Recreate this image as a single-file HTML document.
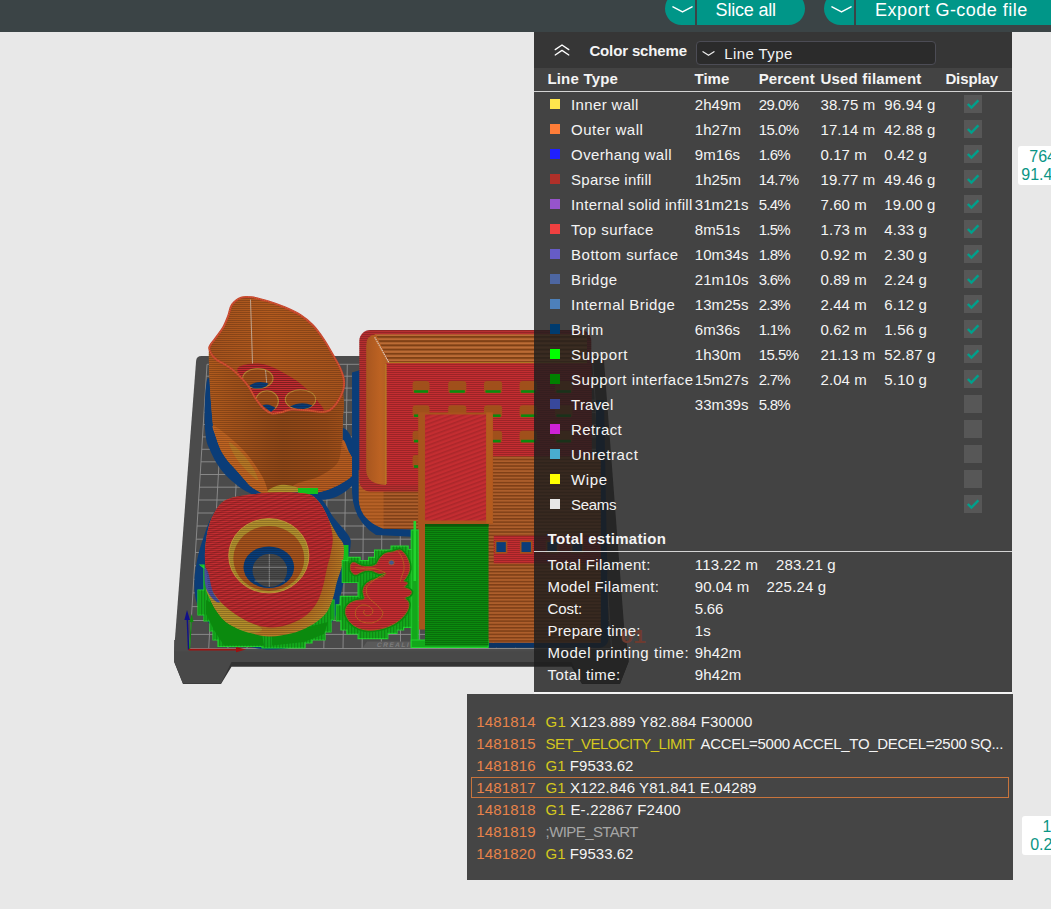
<!DOCTYPE html>
<html><head><meta charset="utf-8"><title>G-code preview</title>
<style>
html,body{margin:0;padding:0;}
body{width:1051px;height:909px;overflow:hidden;background:#e8e8e8;position:relative;font-family:"Liberation Sans",sans-serif;font-size:15px;color:#f4f4f4;}
.abs{position:absolute;}
#topbar{left:0;top:0;width:1051px;height:32px;background:#3b4446;}
.btn{top:-8px;height:33px;background:#009688;border-radius:17px;}
.btn .sep{position:absolute;top:0;width:2px;height:33px;background:#3b4446;}
#scene{left:0;top:0;}
#panel{left:534px;top:32px;width:477.5px;height:660px;background:rgba(30,30,30,0.815);}
#phead{left:534px;top:32px;width:477.5px;height:36px;background:#363636;}
.t{position:absolute;white-space:pre;line-height:18px;height:18px;}
.bt{line-height:22px;height:22px;font-size:18px;color:#fff;}
.b{font-weight:bold;}
.sw{position:absolute;width:10px;height:10px;left:550px;}
.cb{position:absolute;left:964px;width:18px;height:18px;background:#575757;}
.hr{position:absolute;left:534px;width:477.5px;height:1px;background:#d4d4d4;}
#gc{left:467px;top:694px;width:546px;height:186px;background:#454545;}
.ln{color:#e8834a;} .k{color:#d4c81e;} .w{color:#f4f4f4;} .c{color:#a6a6a6;}
.side{left:1018px;width:40px;height:39px;background:#fff;border-radius:3px;}
.sd{color:#0a9585;font-size:16px;}
</style></head><body>
<div id="scene" class="abs"><svg width="1051" height="909" viewBox="0 0 1051 909" style="display:block">
<defs>
<pattern id="st2" width="4" height="2" patternUnits="userSpaceOnUse"><rect width="4" height="1" fill="#000" opacity="0.2"/></pattern>
<pattern id="st3" width="4" height="3.3" patternUnits="userSpaceOnUse"><rect width="4" height="1.5" fill="#000" opacity="0.25"/><rect y="1.5" width="4" height="1.8" fill="#fff" opacity="0.06"/></pattern>
<pattern id="vs" width="3" height="4" patternUnits="userSpaceOnUse"><rect width="1.2" height="4" fill="#000" opacity="0.18"/></pattern>
<pattern id="dg" width="4" height="4" patternUnits="userSpaceOnUse" patternTransform="rotate(-20)"><rect width="4" height="1.6" fill="#000" opacity="0.13"/></pattern>
<linearGradient id="gA" x1="0" x2="1" y1="0" y2="0"><stop offset="0" stop-color="#b05a1d"/><stop offset="0.2" stop-color="#a2521b"/><stop offset="0.5" stop-color="#8f4718"/><stop offset="0.8" stop-color="#984b19"/><stop offset="1" stop-color="#a8551c"/></linearGradient>
<pattern id="st4" width="4" height="4.2" patternUnits="userSpaceOnUse"><rect width="4" height="2" fill="#000" opacity="0.3"/><rect y="2" width="4" height="2.2" fill="#fff" opacity="0.1"/></pattern>
<linearGradient id="gAin" x1="0" x2="1" y1="0" y2="0"><stop offset="0" stop-color="#a6531d"/><stop offset="0.45" stop-color="#b25a1e"/><stop offset="1" stop-color="#a6531d"/></linearGradient>
<linearGradient id="gBwall" x1="0" x2="0" y1="0" y2="1"><stop offset="0" stop-color="#b86d1b"/><stop offset="1" stop-color="#8e4a17"/></linearGradient>
<linearGradient id="gBleft" x1="0" x2="1" y1="0" y2="0"><stop offset="0" stop-color="#a8561f"/><stop offset="0.6" stop-color="#bc6222"/><stop offset="1" stop-color="#b06024"/></linearGradient>
<radialGradient id="gRing" cx="0.45" cy="0.45" r="0.6"><stop offset="0.6" stop-color="#a8541d"/><stop offset="0.85" stop-color="#b47323"/><stop offset="1" stop-color="#b8862e"/></radialGradient>
</defs>
<path d="M174.2 651.0 L174.2 662.0 L183.0 684.0 L221.0 684.0 L231.5 666.8 L571.5 666.8 L582.0 684.0 L620.0 684.0 L628.6 662.0 L628.6 651.0Z" fill="#333333"/>
<path d="M174.2 640.0 L174.2 661.8 L183.0 683.6 L221.0 683.6 L231.5 662.0 L571.5 662.0 L582.0 683.6 L620.0 683.6 L628.4 661.8 L626.5 640.0Z" fill="#484848"/>
<path d="M201.5 356.0 L598.5 356.0 Q603.5 356.0 604.0 361.0 L626.0 651.5 L174.0 651.5 L196.1 361.0 Q196.5 356.0 201.5 356.0Z" fill="#4b4b4b"/>
<path d="M207.0 364.3L189.5 648.5M207.0 364.3L592.8 364.3M224.5 364.3L208.7 648.5M206.3 376.2L593.6 376.2M242.1 364.3L227.9 648.5M205.5 388.1L594.4 388.1M259.6 364.3L247.0 648.5M204.8 400.1L595.2 400.1M277.1 364.3L266.2 648.5M204.0 412.3L596.0 412.3M294.7 364.3L285.4 648.5M203.3 424.5L596.8 424.5M312.2 364.3L304.6 648.5M202.5 436.9L597.6 436.9M329.8 364.3L323.8 648.5M201.8 449.3L598.4 449.3M347.3 364.3L343.0 648.5M201.0 461.8L599.2 461.8M364.8 364.3L362.1 648.5M200.2 474.5L600.0 474.5M382.4 364.3L381.3 648.5M199.4 487.2L600.9 487.2M399.9 364.3L400.5 648.5M198.6 500.0L601.7 500.0M417.4 364.3L419.7 648.5M197.8 513.0L602.6 513.0M435.0 364.3L438.9 648.5M197.0 526.0L603.4 526.0M452.5 364.3L458.0 648.5M196.2 539.2L604.3 539.2M470.0 364.3L477.2 648.5M195.4 552.5L605.2 552.5M487.6 364.3L496.4 648.5M194.6 565.8L606.1 565.8M505.1 364.3L515.6 648.5M193.8 579.3L606.9 579.3M522.7 364.3L534.8 648.5M192.9 592.9L607.8 592.9M540.2 364.3L554.0 648.5M192.1 606.6L608.7 606.6M557.7 364.3L573.1 648.5M191.2 620.5L609.7 620.5M575.3 364.3L592.3 648.5M190.4 634.4L610.6 634.4M592.8 364.3L611.5 648.5M189.5 648.5L611.5 648.5" stroke="#8f8f8f" stroke-width="0.9" fill="none"/>
<path d="M367 641.5 L470 641.5 L470 648 L362.5 648Z" fill="#5a5a5a"/>
<text x="376.5" y="647.3" font-family="Liberation Sans, sans-serif" font-size="6.6" font-weight="bold" fill="#7c7c7c" letter-spacing="1.5" transform="skewX(-12)" style="transform-origin:376px 647px">CREALITY</text>
<path d="M212.0 378.0 C206.4 378.0 207.5 377.7 206.3 384.0 C205.1 390.3 204.6 406.8 204.6 416.0 C204.6 425.2 205.3 433.6 206.2 439.3 C207.1 445.0 208.3 446.1 210.0 450.0 C211.7 453.9 213.6 458.3 216.2 462.4 C218.8 466.5 221.6 470.7 225.4 474.8 C229.2 478.9 235.2 483.9 239.3 487.0 C243.4 490.1 246.9 491.5 250.0 493.3 C253.1 495.1 254.1 496.8 257.8 497.9 C261.5 499.0 265.0 499.7 272.0 500.0 C279.0 500.3 290.5 499.7 300.0 499.5 C309.5 499.3 321.1 500.6 329.0 499.0 C336.9 497.4 342.6 493.8 347.3 490.0 C352.1 486.2 355.8 481.3 357.5 476.0 C359.2 470.7 358.4 463.3 357.8 458.0 C357.2 452.7 355.7 448.5 354.0 444.0 C352.3 439.5 350.2 434.2 347.5 431.0 C344.8 427.8 345.9 430.2 338.0 425.0 C330.1 419.8 316.3 406.8 300.0 400.0 C283.7 393.2 254.7 387.7 240.0 384.0 C225.3 380.3 217.6 378.0 212.0 378.0Z" fill="#0b3d78" />
<path d="M209.3 347.5 C210.3 342.3 212.9 341.9 215.2 338.7 C217.4 335.5 220.6 331.9 222.8 328.1 C225.0 324.3 226.7 319.8 228.2 315.9 C229.7 312.0 229.8 307.6 232.0 304.5 C234.2 301.4 237.8 298.8 241.1 297.6 C244.4 296.4 247.2 296.7 251.8 297.3 C256.4 297.9 262.9 299.7 268.5 301.4 C274.1 303.1 279.9 305.2 285.2 307.5 C290.5 309.8 295.9 312.2 300.5 315.1 C305.1 318.0 308.8 321.1 312.6 325.0 C316.4 328.9 320.0 333.9 323.3 338.7 C326.6 343.5 329.6 349.1 332.4 353.9 C335.2 358.7 338.1 363.3 340.0 367.6 C341.9 371.9 343.4 376.0 343.9 379.8 C344.4 383.6 343.1 386.3 343.1 390.5 C343.1 394.7 343.9 399.9 343.8 405.0 C343.7 410.1 342.9 414.8 342.7 421.3 C342.5 427.8 341.6 438.9 342.7 444.2 C343.8 449.5 347.4 449.9 349.5 453.3 C351.6 456.7 354.9 460.9 355.3 464.7 C355.7 468.5 354.7 472.7 351.8 476.1 C348.9 479.5 343.4 482.6 338.1 485.3 C332.8 488.0 326.2 490.9 319.9 492.1 C313.5 493.3 305.3 492.5 300.0 492.5 C294.7 492.5 292.6 491.8 287.9 492.0 C283.2 492.2 276.2 493.8 272.0 494.0 C267.8 494.2 265.8 494.2 262.4 493.0 C259.0 491.8 254.7 489.3 251.6 487.0 C248.5 484.7 246.6 481.8 244.0 479.0 C241.4 476.2 238.9 473.0 236.2 470.0 C233.5 467.0 230.6 464.3 228.0 461.0 C225.4 457.7 222.8 454.0 220.8 450.0 C218.8 446.0 217.3 441.1 216.0 437.0 C214.7 432.9 214.0 431.9 213.1 425.5 C212.2 419.1 211.3 407.8 210.7 398.5 C210.0 389.2 209.4 378.5 209.2 370.0 C209.0 361.5 208.3 352.7 209.3 347.5Z" fill="url(#gA)" />
<path d="M209.3 347.5 C209.9 344.8 212.9 341.9 215.2 338.7 C217.4 335.5 220.6 331.9 222.8 328.1 C225.0 324.3 226.7 319.8 228.2 315.9 C229.7 312.0 229.8 307.6 232.0 304.5 C234.2 301.4 237.8 298.8 241.1 297.6 C244.4 296.4 247.2 296.7 251.8 297.3 C256.4 297.9 262.9 299.7 268.5 301.4 C274.1 303.1 279.9 305.2 285.2 307.5 C290.5 309.8 295.9 312.2 300.5 315.1 C305.1 318.0 308.8 321.1 312.6 325.0 C316.4 328.9 320.0 333.9 323.3 338.7 C326.6 343.5 329.6 349.1 332.4 353.9 C335.2 358.7 338.1 363.3 340.0 367.6 C341.9 371.9 343.4 376.0 343.9 379.8 C344.4 383.6 344.2 386.7 343.1 390.5 C342.0 394.3 339.3 399.3 337.0 402.6 C334.7 405.9 332.2 408.8 329.4 410.3 C326.6 411.8 324.1 411.8 320.3 411.8 C316.5 411.8 311.4 410.7 306.6 410.3 C301.8 409.9 295.6 409.1 291.3 409.5 C287.0 409.9 284.0 411.9 280.7 412.5 C277.4 413.1 274.3 413.9 271.5 413.3 C268.7 412.7 266.4 411.0 263.9 408.7 C261.4 406.4 258.9 403.3 256.3 399.6 C253.7 395.9 250.9 390.0 248.5 386.5 C246.1 383.0 244.6 381.4 242.1 378.7 C239.6 376.0 236.4 372.8 233.6 370.4 C230.8 368.0 227.8 366.3 225.0 364.6 C222.2 362.9 219.2 361.6 217.0 360.0 C214.8 358.4 213.2 357.0 211.9 354.9 C210.6 352.8 208.8 350.2 209.3 347.5Z" fill="url(#gAin)" />
<path d="M237.3 369.2 C237.8 366.9 241.8 365.5 245.7 364.6 C249.6 363.7 256.3 363.3 260.9 363.8 C265.5 364.3 269.1 366.0 273.1 367.6 C277.2 369.2 281.1 371.4 285.2 373.7 C289.2 376.0 293.3 378.2 297.4 381.3 C301.5 384.4 306.1 388.4 309.6 392.0 C313.2 395.6 316.4 399.4 318.7 402.6 C321.0 405.8 325.3 409.8 323.3 411.0 C321.3 412.2 311.9 410.3 306.6 410.0 C301.3 409.7 295.6 408.7 291.3 409.0 C287.0 409.3 284.0 411.3 280.7 412.0 C277.4 412.7 274.3 413.6 271.5 413.0 C268.7 412.4 266.4 410.5 263.9 408.2 C261.4 405.9 258.9 402.7 256.3 399.0 C253.7 395.3 250.8 389.4 248.5 386.0 C246.2 382.6 244.4 381.3 242.5 378.5 C240.6 375.7 236.8 371.5 237.3 369.2Z" fill="#c42d31" />
<path d="M237.3 369.2 C237.8 366.9 241.8 365.5 245.7 364.6 C249.6 363.7 256.3 363.3 260.9 363.8 C265.5 364.3 269.1 366.0 273.1 367.6 C277.2 369.2 281.1 371.4 285.2 373.7 C289.2 376.0 293.3 378.2 297.4 381.3 C301.5 384.4 306.1 388.4 309.6 392.0 C313.2 395.6 316.4 399.4 318.7 402.6 C321.0 405.8 325.3 409.8 323.3 411.0 C321.3 412.2 311.9 410.3 306.6 410.0 C301.3 409.7 295.6 408.7 291.3 409.0 C287.0 409.3 284.0 411.3 280.7 412.0 C277.4 412.7 274.3 413.6 271.5 413.0 C268.7 412.4 266.4 410.5 263.9 408.2 C261.4 405.9 258.9 402.7 256.3 399.0 C253.7 395.3 250.8 389.4 248.5 386.0 C246.2 382.6 244.4 381.3 242.5 378.5 C240.6 375.7 236.8 371.5 237.3 369.2Z" fill="url(#st2)" />
<ellipse cx="257.8" cy="378.5" rx="15.2" ry="9.9" fill="#a0501b" stroke="#c08a35" stroke-width="1.1"/>
<ellipse cx="267.0" cy="401.1" rx="11.4" ry="10.3" fill="#a0501b" stroke="#c08a35" stroke-width="1.1"/>
<ellipse cx="300.5" cy="399.6" rx="15.2" ry="9.9" fill="#a0501b" stroke="#c08a35" stroke-width="1.1"/>
<path d="M249.5 385.5 Q258 379.5 268.5 383.5 Q266 388.5 257 388.5 Q251.5 388.5 249.5 385.5Z" fill="#0b3d78" />
<path d="M262.5 405.5 Q268 402.5 275.5 408 L271 412Z" fill="#0b3d78" />
<path d="M290 406.5 Q301 400.5 312.5 405.5 Q308 409.5 298 409.2Z" fill="#0b3d78" />
<path d="M265.5 370 L266.7 383" stroke="#c9b9a8" stroke-width="0.8" fill="none"/>
<path d="M343.1 390.5 C342.1 392.5 339.3 399.3 337.0 402.6 C334.7 405.9 332.2 408.8 329.4 410.3 C326.6 411.8 324.1 411.8 320.3 411.8 C316.5 411.8 311.4 410.7 306.6 410.3 C301.8 409.9 295.6 409.1 291.3 409.5 C287.0 409.9 284.0 411.9 280.7 412.5 C277.4 413.1 274.3 413.9 271.5 413.3 C268.7 412.7 266.4 411.0 263.9 408.7 C261.4 406.4 258.9 403.3 256.3 399.6 C253.7 395.9 250.9 390.0 248.5 386.5 C246.1 383.0 244.6 381.4 242.1 378.7 C239.6 376.0 236.4 372.8 233.6 370.4 C230.8 368.0 227.8 366.3 225.0 364.6 C222.2 362.9 219.2 361.6 217.0 360.0 C214.8 358.4 213.2 357.0 211.9 354.9 C210.6 352.8 209.7 348.7 209.3 347.5 L209.2 370 L210.7 398.5 L213.1 425.5 L216 437 L220.8 450 L228 461 L236.2 470 L244 479 L251.6 487 L262.4 493 L272 494 L287.9 492 L300 492.5 L319.9 492.1 L338.1 485.3 L351.8 476.1 L355.3 464.7 L349.5 453.3 L342.7 444.2 L342.7 421.3 L343.8 405Z" fill="url(#gA)" />
<path d="M213.1 425.5 C215.1 425.3 222.5 431.4 228.0 436.0 C233.5 440.6 240.3 446.3 246.0 453.0 C251.7 459.7 258.3 469.3 262.0 476.0 C265.7 482.7 267.9 490.2 268.0 493.0 C268.1 495.8 265.1 494.0 262.4 493.0 C259.7 492.0 254.7 489.3 251.6 487.0 C248.5 484.7 246.6 481.8 244.0 479.0 C241.4 476.2 238.9 473.0 236.2 470.0 C233.5 467.0 230.6 464.3 228.0 461.0 C225.4 457.7 222.8 454.0 220.8 450.0 C218.8 446.0 217.3 441.1 216.0 437.0 C214.7 432.9 211.1 425.7 213.1 425.5Z" fill="#c06422" />
<path d="M229.0 442.0 C229.8 441.0 237.2 448.0 241.0 452.0 C244.8 456.0 249.2 461.3 252.0 466.0 C254.8 470.7 258.7 479.0 258.0 480.0 C257.3 481.0 251.7 475.7 248.0 472.0 C244.3 468.3 239.2 463.0 236.0 458.0 C232.8 453.0 228.2 443.0 229.0 442.0Z" fill="#b3922c" opacity="0.45"/>
<path d="M342.7 440.0 C344.6 438.6 347.4 449.2 349.5 453.3 C351.6 457.4 354.9 460.9 355.3 464.7 C355.7 468.5 354.7 472.7 351.8 476.1 C348.9 479.5 343.4 482.6 338.1 485.3 C332.8 488.0 326.2 490.9 319.9 492.1 C313.5 493.3 305.3 492.5 300.0 492.5 C294.7 492.5 288.6 493.4 287.9 492.0 C287.2 490.6 290.6 486.7 296.0 484.0 C301.4 481.3 313.0 479.7 320.0 476.0 C327.0 472.3 334.2 468.0 338.0 462.0 C341.8 456.0 340.8 441.4 342.7 440.0Z" fill="#b65c20" />
<path d="M268.0 492.0 C264.7 490.8 275.3 485.8 280.0 485.0 C284.7 484.2 292.7 485.8 296.0 487.0 C299.3 488.2 304.7 491.7 300.0 492.5 C295.3 493.3 271.3 493.2 268.0 492.0Z" fill="#b3922c" />
<path d="M209.3 347.5 C210.3 342.3 212.9 341.9 215.2 338.7 C217.4 335.5 220.6 331.9 222.8 328.1 C225.0 324.3 226.7 319.8 228.2 315.9 C229.7 312.0 229.8 307.6 232.0 304.5 C234.2 301.4 237.8 298.8 241.1 297.6 C244.4 296.4 247.2 296.7 251.8 297.3 C256.4 297.9 262.9 299.7 268.5 301.4 C274.1 303.1 279.9 305.2 285.2 307.5 C290.5 309.8 295.9 312.2 300.5 315.1 C305.1 318.0 308.8 321.1 312.6 325.0 C316.4 328.9 320.0 333.9 323.3 338.7 C326.6 343.5 329.6 349.1 332.4 353.9 C335.2 358.7 338.1 363.3 340.0 367.6 C341.9 371.9 343.4 376.0 343.9 379.8 C344.4 383.6 343.1 386.3 343.1 390.5 C343.1 394.7 343.9 399.9 343.8 405.0 C343.7 410.1 342.9 414.8 342.7 421.3 C342.5 427.8 341.6 438.9 342.7 444.2 C343.8 449.5 347.4 449.9 349.5 453.3 C351.6 456.7 354.9 460.9 355.3 464.7 C355.7 468.5 354.7 472.7 351.8 476.1 C348.9 479.5 343.4 482.6 338.1 485.3 C332.8 488.0 326.2 490.9 319.9 492.1 C313.5 493.3 305.3 492.5 300.0 492.5 C294.7 492.5 292.6 491.8 287.9 492.0 C283.2 492.2 276.2 493.8 272.0 494.0 C267.8 494.2 265.8 494.2 262.4 493.0 C259.0 491.8 254.7 489.3 251.6 487.0 C248.5 484.7 246.6 481.8 244.0 479.0 C241.4 476.2 238.9 473.0 236.2 470.0 C233.5 467.0 230.6 464.3 228.0 461.0 C225.4 457.7 222.8 454.0 220.8 450.0 C218.8 446.0 217.3 441.1 216.0 437.0 C214.7 432.9 214.0 431.9 213.1 425.5 C212.2 419.1 211.3 407.8 210.7 398.5 C210.0 389.2 209.4 378.5 209.2 370.0 C209.0 361.5 208.3 352.7 209.3 347.5Z" fill="url(#st2)" />
<path d="M209.3 347.5 C209.9 344.8 212.9 341.9 215.2 338.7 C217.4 335.5 220.6 331.9 222.8 328.1 C225.0 324.3 226.7 319.8 228.2 315.9 C229.7 312.0 229.8 307.6 232.0 304.5 C234.2 301.4 237.8 298.8 241.1 297.6 C244.4 296.4 247.2 296.7 251.8 297.3 C256.4 297.9 262.9 299.7 268.5 301.4 C274.1 303.1 279.9 305.2 285.2 307.5 C290.5 309.8 295.9 312.2 300.5 315.1 C305.1 318.0 308.8 321.1 312.6 325.0 C316.4 328.9 320.0 333.9 323.3 338.7 C326.6 343.5 329.6 349.1 332.4 353.9 C335.2 358.7 338.1 363.3 340.0 367.6 C341.9 371.9 343.4 376.0 343.9 379.8 C344.4 383.6 344.2 386.7 343.1 390.5 C342.0 394.3 339.3 399.3 337.0 402.6 C334.7 405.9 332.2 408.8 329.4 410.3 C326.6 411.8 324.1 411.8 320.3 411.8 C316.5 411.8 311.4 410.7 306.6 410.3 C301.8 409.9 295.6 409.1 291.3 409.5 C287.0 409.9 284.0 411.9 280.7 412.5 C277.4 413.1 274.3 413.9 271.5 413.3 C268.7 412.7 266.4 411.0 263.9 408.7 C261.4 406.4 258.9 403.3 256.3 399.6 C253.7 395.9 250.9 390.0 248.5 386.5 C246.1 383.0 244.6 381.4 242.1 378.7 C239.6 376.0 236.4 372.8 233.6 370.4 C230.8 368.0 227.8 366.3 225.0 364.6 C222.2 362.9 219.2 361.6 217.0 360.0 C214.8 358.4 213.2 357.0 211.9 354.9 C210.6 352.8 208.8 350.2 209.3 347.5Z" fill="none" stroke="#c43e2e" stroke-width="2"/>
<path d="M209.3 347.5 C209.9 344.8 212.9 341.9 215.2 338.7 C217.4 335.5 220.6 331.9 222.8 328.1 C225.0 324.3 226.7 319.8 228.2 315.9 C229.7 312.0 229.8 307.6 232.0 304.5 C234.2 301.4 237.8 298.8 241.1 297.6 C244.4 296.4 247.2 296.7 251.8 297.3 C256.4 297.9 262.9 299.7 268.5 301.4 C274.1 303.1 279.9 305.2 285.2 307.5 C290.5 309.8 295.9 312.2 300.5 315.1 C305.1 318.0 308.8 321.1 312.6 325.0 C316.4 328.9 320.0 333.9 323.3 338.7 C326.6 343.5 329.6 349.1 332.4 353.9 C335.2 358.7 338.1 363.3 340.0 367.6 C341.9 371.9 343.4 376.0 343.9 379.8 C344.4 383.6 344.2 386.7 343.1 390.5 C342.0 394.3 339.3 399.3 337.0 402.6 C334.7 405.9 332.2 408.8 329.4 410.3 C326.6 411.8 324.1 411.8 320.3 411.8 C316.5 411.8 311.4 410.7 306.6 410.3 C301.8 409.9 295.6 409.1 291.3 409.5 C287.0 409.9 284.0 411.9 280.7 412.5 C277.4 413.1 274.3 413.9 271.5 413.3 C268.7 412.7 266.4 411.0 263.9 408.7 C261.4 406.4 258.9 403.3 256.3 399.6 C253.7 395.9 250.9 390.0 248.5 386.5 C246.1 383.0 244.6 381.4 242.1 378.7 C239.6 376.0 236.4 372.8 233.6 370.4 C230.8 368.0 227.8 366.3 225.0 364.6 C222.2 362.9 219.2 361.6 217.0 360.0 C214.8 358.4 213.2 357.0 211.9 354.9 C210.6 352.8 208.8 350.2 209.3 347.5Z" fill="none" stroke="#d9892f" stroke-width="0.6" stroke-dasharray="1 1"/>
<path d="M250.5 299.5 L252.5 363.5" stroke="#c9b9a8" stroke-width="0.8" fill="none"/>
<path d="M352 372.5 L352 492 Q353 521 376 535 L418 537 L418 520 L362 470 L362 369.5Z" fill="#0b3d78" />
<path d="M488 640 L596 640 L596 400 L604 400 L608.5 636 Q609 647.8 598 647.8 L488 647.8Z" fill="#0a3364" />
<path d="M358.8 342 L358.8 500 Q360 520 383.6 528.8 L418.7 529.5 L418.7 470 L358.8 470Z" fill="#a8541e" />
<path d="M358.8 470 L358.8 500 Q360 520 383.6 528.8 L418.7 529.5 L418.7 491 L370 491 Q361 489 358.8 470Z" fill="url(#st3)" />
<path d="M358.8 470 L358.8 500 Q360 520 383.6 528.8 L383.6 491 L370 491 Q361 489 358.8 470Z" fill="#c46522" opacity="0.45"/>
<rect x="359.3" y="330" width="232" height="161.5" rx="11" ry="11" fill="#b62f30"/>
<rect x="359.3" y="330" width="232" height="161.5" rx="11" ry="11" fill="url(#st2)"/>
<path d="M374.6 334.2 L587 334.2 L587 362.6 L389.4 362.6Z" fill="#b45b1e"/>
<path d="M374.6 334.2 L587 334.2 L587 362.6 L389.4 362.6Z" fill="url(#st4)"/>
<path d="M366.2 346 Q366.2 335 376 334.6 L389.3 363.3 L386 363.5 L386 485 Q366.2 484 366.2 470Z" fill="url(#gBleft)"/>
<path d="M374.7 337.3 L389.3 363.3" stroke="#ddd0c4" stroke-width="1.1" stroke-dasharray="1.4 0.7" fill="none"/>
<path d="M386.2 364 L386.2 484" stroke="#b89a25" stroke-width="1" fill="none"/>
<path d="M389 362.8 L587 362.8" stroke="#b89025" stroke-width="1" fill="none"/>
<rect x="386.7" y="363.4" width="205.0" height="121.5" fill="#c42d31" />
<rect x="386.7" y="363.4" width="205.0" height="121.5" fill="url(#st2)" />
<rect x="412.6" y="381" width="16.9" height="12.2" rx="3" fill="#a0501b"/>
<rect x="414.1" y="390.2" width="13.9" height="2.6" fill="#0b8a0e"/>
<rect x="448.2" y="381" width="18.1" height="12.2" rx="3" fill="#a0501b"/>
<rect x="449.7" y="390.2" width="15.1" height="2.6" fill="#0b8a0e"/>
<rect x="484" y="381" width="18.1" height="12.2" rx="3" fill="#a0501b"/>
<rect x="485.5" y="390.2" width="15.1" height="2.6" fill="#0b8a0e"/>
<rect x="519.6" y="381" width="17.4" height="12.2" rx="3" fill="#a0501b"/>
<rect x="521.1" y="390.2" width="14.4" height="2.6" fill="#0b8a0e"/>
<rect x="555" y="381" width="17.5" height="12.2" rx="3" fill="#a0501b"/>
<rect x="556.5" y="390.2" width="14.5" height="2.6" fill="#0b8a0e"/>
<rect x="412.6" y="405.3" width="16.9" height="12.1" rx="3" fill="#a0501b"/>
<rect x="414.1" y="414.4" width="13.9" height="2.6" fill="#0b8a0e"/>
<rect x="448.2" y="405.3" width="18.1" height="12.1" rx="3" fill="#a0501b"/>
<rect x="449.7" y="414.4" width="15.1" height="2.6" fill="#0b8a0e"/>
<rect x="484" y="405.3" width="18.1" height="12.1" rx="3" fill="#a0501b"/>
<rect x="485.5" y="414.4" width="15.1" height="2.6" fill="#0b8a0e"/>
<rect x="519.6" y="405.3" width="17.4" height="12.1" rx="3" fill="#a0501b"/>
<rect x="521.1" y="414.4" width="14.4" height="2.6" fill="#0b8a0e"/>
<rect x="555" y="405.3" width="17.5" height="12.1" rx="3" fill="#a0501b"/>
<rect x="556.5" y="414.4" width="14.5" height="2.6" fill="#0b8a0e"/>
<rect x="412.6" y="430.7" width="16.9" height="12.1" rx="3" fill="#a0501b"/>
<rect x="414.1" y="439.8" width="13.9" height="2.6" fill="#0b8a0e"/>
<rect x="448.2" y="430.7" width="18.1" height="12.1" rx="3" fill="#a0501b"/>
<rect x="449.7" y="439.8" width="15.1" height="2.6" fill="#0b8a0e"/>
<rect x="484" y="430.7" width="18.1" height="12.1" rx="3" fill="#a0501b"/>
<rect x="485.5" y="439.8" width="15.1" height="2.6" fill="#0b8a0e"/>
<rect x="519.6" y="430.7" width="17.4" height="12.1" rx="3" fill="#a0501b"/>
<rect x="521.1" y="439.8" width="14.4" height="2.6" fill="#0b8a0e"/>
<rect x="555" y="430.7" width="17.5" height="12.1" rx="3" fill="#a0501b"/>
<rect x="556.5" y="439.8" width="14.5" height="2.6" fill="#0b8a0e"/>
<rect x="412.6" y="454.9" width="16.9" height="13.3" rx="3" fill="#a0501b"/>
<rect x="414.1" y="465.2" width="13.9" height="2.6" fill="#0b8a0e"/>
<rect x="492.8" y="456.4" width="108.0" height="186.4" fill="#a8541e" />
<rect x="488.0" y="523.0" width="6.0" height="119.8" fill="#a8541e" />
<rect x="488.0" y="456.4" width="113.0" height="186.4" fill="url(#st3)" />
<rect x="493.8" y="535.7" width="107.0" height="27.7" fill="#c42d31" />
<rect x="493.8" y="535.7" width="107.0" height="27.7" fill="url(#st2)" />
<rect x="495.6" y="541.3" width="11.0" height="11.5" fill="#0b3d78" stroke="#a0501b" stroke-width="1.6"/>
<rect x="520.7" y="541.3" width="11.0" height="11.5" fill="#0b3d78" stroke="#a0501b" stroke-width="1.6"/>
<rect x="546.6" y="541.3" width="11.0" height="11.5" fill="#0b3d78" stroke="#a0501b" stroke-width="1.6"/>
<rect x="571.7" y="541.3" width="11.0" height="11.5" fill="#0b3d78" stroke="#a0501b" stroke-width="1.6"/>
<rect x="418.4" y="412.5" width="74.4" height="111.5" fill="#a8541d" />
<rect x="425.0" y="414.5" width="61.2" height="106.0" fill="#c42d31" />
<rect x="425.0" y="414.5" width="61.2" height="106.0" fill="url(#dg)" />
<rect x="418.4" y="412.5" width="6.6" height="217" fill="#a8541d"/>
<rect x="486.2" y="412.5" width="6.6" height="111" fill="#b45b1e"/>
<rect x="411.2" y="530.0" width="7.0" height="117.5" fill="#13a81b" stroke="#22d42e" stroke-width="1"/>
<rect x="411.2" y="640.0" width="77.0" height="7.5" fill="#13a81b" stroke="#22d42e" stroke-width="1"/>
<rect x="413.5" y="521.0" width="2.6" height="60.0" fill="#22d42e" />
<rect x="425.0" y="524.0" width="63.5" height="121.5" fill="#0b8a0e" />
<rect x="425.0" y="524.0" width="63.5" height="121.5" fill="url(#st2)" />
<rect x="425.0" y="524.0" width="63.5" height="2.5" fill="#0a5a0a" />
<path d="M222.0 503.0 C226.7 499.7 227.0 497.8 240.0 496.0 C253.0 494.2 286.7 491.7 300.0 492.0 C313.3 492.3 314.3 493.7 320.0 498.0 C325.7 502.3 329.2 511.8 334.0 518.0 C338.8 524.2 345.8 530.8 348.5 535.5 C351.2 540.2 350.9 540.2 350.5 546.0 C350.1 551.8 347.8 561.3 346.0 570.0 C344.2 578.7 342.0 589.8 340.0 598.0 C338.0 606.2 337.7 612.7 334.0 619.0 C330.3 625.3 324.5 631.3 318.0 636.0 C311.5 640.7 304.3 644.8 295.0 647.0 C285.7 649.2 272.5 650.2 262.0 649.0 C251.5 647.8 241.0 644.5 232.0 640.0 C223.0 635.5 213.9 628.3 208.0 622.0 C202.1 615.7 198.8 609.2 196.5 602.0 C194.2 594.8 194.2 586.7 194.5 579.0 C194.8 571.3 196.4 563.2 198.0 556.0 C199.6 548.8 201.7 542.7 204.0 536.0 C206.3 529.3 209.0 521.5 212.0 516.0 C215.0 510.5 217.3 506.3 222.0 503.0Z" fill="#0b3d78" />
<path d="M200.5 565.0 L204.0 565.0 L204.0 590.0 L198.0 590.0 L198.0 615.0 L204.0 615.0 L204.0 621.0 L210.0 621.0 L210.0 631.0 L213.0 631.0 L213.0 640.0 L218.0 640.0 L218.0 646.5 L262.0 646.5 L262.0 648.0 L305.0 648.0 L305.0 643.0 L312.0 643.0 L312.0 640.0 L325.0 640.0 L325.0 632.0 L331.0 632.0 L331.0 620.0 L334.0 620.0 L334.0 600.0 L300.0 600.0 L230.0 590.0Z" fill="#13a81b" stroke="#22d42e" stroke-width="1.2"/>
<path d="M200.5 565.0 L204.0 565.0 L204.0 590.0 L198.0 590.0 L198.0 615.0 L204.0 615.0 L204.0 621.0 L210.0 621.0 L210.0 631.0 L213.0 631.0 L213.0 640.0 L218.0 640.0 L218.0 646.5 L262.0 646.5 L262.0 648.0 L305.0 648.0 L305.0 643.0 L312.0 643.0 L312.0 640.0 L325.0 640.0 L325.0 632.0 L331.0 632.0 L331.0 620.0 L334.0 620.0 L334.0 600.0 L300.0 600.0 L230.0 590.0Z" fill="url(#vs)" />
<path d="M206.0 600.0 L236.0 616.0 L262.0 634.0 L264.0 645.5 L224.0 645.5 L214.0 630.0 L206.0 614.0Z" fill="#0b8a0e" />
<path d="M272.0 636.0 L328.0 622.0 L324.0 634.0 L304.0 642.0 L272.0 645.5Z" fill="#0b8a0e" />
<rect x="343.0" y="545.0" width="5.5" height="30.0" fill="#12bf1c" />
<rect x="298.0" y="488.0" width="20.0" height="6.0" fill="#12bf1c" />
<path d="M221.7 502.8 C225.7 499.3 230.0 498.3 235.6 496.8 C241.2 495.3 248.1 494.6 255.4 493.9 C262.7 493.1 271.6 492.5 279.2 492.3 C286.8 492.1 295.4 492.3 301.0 492.9 C306.6 493.5 309.3 493.8 312.8 495.9 C316.3 498.0 319.2 501.9 321.8 505.8 C324.4 509.8 326.1 514.6 328.7 519.6 C331.3 524.6 335.1 531.2 337.6 535.5 C340.1 539.8 342.8 540.8 343.6 545.4 C344.4 550.0 343.8 556.9 342.6 563.2 C341.4 569.5 338.2 577.0 336.6 583.0 C335.0 589.0 334.7 593.6 332.7 598.9 C330.7 604.2 328.7 610.1 324.7 614.7 C320.7 619.3 314.5 623.5 308.9 626.6 C303.3 629.8 297.6 632.0 291.0 633.6 C284.4 635.2 276.2 636.7 269.3 636.5 C262.4 636.3 256.0 634.6 249.4 632.6 C242.8 630.6 234.9 627.9 229.6 624.6 C224.3 621.3 221.0 617.2 217.7 612.8 C214.4 608.4 211.8 604.3 210.0 598.0 C208.2 591.7 207.7 582.2 206.8 575.1 C206.0 568.0 204.9 561.9 204.9 555.3 C204.9 548.7 205.7 541.8 206.8 535.5 C208.0 529.2 209.3 523.1 211.8 517.6 C214.3 512.1 217.7 506.3 221.7 502.8Z" fill="url(#gRing)" />
<path d="M206.0 590.0 C205.3 586.7 210.5 590.1 213.8 592.9 C217.1 595.7 221.4 602.8 225.7 606.8 C230.0 610.8 234.6 613.7 239.5 616.7 C244.4 619.7 251.7 622.4 255.4 624.6 C259.1 626.8 262.9 628.6 262.0 630.0 C261.1 631.4 255.4 633.9 250.0 633.0 C244.6 632.1 235.0 628.0 229.6 624.6 C224.2 621.2 221.6 618.6 217.7 612.8 C213.8 607.0 206.7 593.3 206.0 590.0Z" fill="#b3922c" opacity="0.85"/>
<path d="M221.7 502.8 C225.7 499.3 230.0 498.3 235.6 496.8 C241.2 495.3 248.1 494.6 255.4 493.9 C262.7 493.1 271.6 492.5 279.2 492.3 C286.8 492.1 295.4 492.3 301.0 492.9 C306.6 493.5 309.3 493.8 312.8 495.9 C316.3 498.0 319.2 501.9 321.8 505.8 C324.4 509.8 326.9 514.3 328.7 519.6 C330.5 524.9 332.4 531.9 332.7 537.5 C333.0 543.1 331.7 548.0 330.7 553.3 C329.7 558.6 328.0 563.6 326.7 569.2 C325.4 574.8 324.4 581.4 322.8 587.0 C321.2 592.6 319.5 598.2 316.8 602.8 C314.1 607.4 311.2 611.2 306.9 614.7 C302.6 618.2 296.6 621.5 291.0 623.6 C285.4 625.8 279.1 627.4 273.2 627.6 C267.3 627.8 261.0 626.4 255.4 624.6 C249.8 622.8 244.4 619.7 239.5 616.7 C234.6 613.7 230.0 610.8 225.7 606.8 C221.4 602.8 217.0 598.2 213.8 592.9 C210.7 587.6 208.3 581.4 206.8 575.1 C205.3 568.8 204.9 561.9 204.9 555.3 C204.9 548.7 205.7 541.8 206.8 535.5 C208.0 529.2 209.3 523.1 211.8 517.6 C214.3 512.1 217.7 506.3 221.7 502.8Z" fill="#c42d31" />
<path d="M221.7 502.8 C225.7 499.3 230.0 498.3 235.6 496.8 C241.2 495.3 248.1 494.6 255.4 493.9 C262.7 493.1 271.6 492.5 279.2 492.3 C286.8 492.1 295.4 492.3 301.0 492.9 C306.6 493.5 309.3 493.8 312.8 495.9 C316.3 498.0 319.2 501.9 321.8 505.8 C324.4 509.8 326.9 514.3 328.7 519.6 C330.5 524.9 332.4 531.9 332.7 537.5 C333.0 543.1 331.7 548.0 330.7 553.3 C329.7 558.6 328.0 563.6 326.7 569.2 C325.4 574.8 324.4 581.4 322.8 587.0 C321.2 592.6 319.5 598.2 316.8 602.8 C314.1 607.4 311.2 611.2 306.9 614.7 C302.6 618.2 296.6 621.5 291.0 623.6 C285.4 625.8 279.1 627.4 273.2 627.6 C267.3 627.8 261.0 626.4 255.4 624.6 C249.8 622.8 244.4 619.7 239.5 616.7 C234.6 613.7 230.0 610.8 225.7 606.8 C221.4 602.8 217.0 598.2 213.8 592.9 C210.7 587.6 208.3 581.4 206.8 575.1 C205.3 568.8 204.9 561.9 204.9 555.3 C204.9 548.7 205.7 541.8 206.8 535.5 C208.0 529.2 209.3 523.1 211.8 517.6 C214.3 512.1 217.7 506.3 221.7 502.8Z" fill="url(#dg)" />
<path d="M204.5 569.0 C204.8 566.3 206.6 568.2 208.0 572.0 C209.4 575.8 211.0 587.0 213.0 592.0 C215.0 597.0 219.8 600.7 220.0 602.0 C220.2 603.3 216.3 602.3 214.0 600.0 C211.7 597.7 207.6 593.2 206.0 588.0 C204.4 582.8 204.2 571.7 204.5 569.0Z" fill="#4a4f9a" />
<ellipse cx="268.8" cy="555.8" rx="40.1" ry="37.2" fill="#b3902e" />
<ellipse cx="268.8" cy="558.5" rx="35.5" ry="32.5" fill="#a6531d" />
<ellipse cx="268.8" cy="567.2" rx="25.3" ry="20.8" fill="#0b3d78" />
<ellipse cx="269.8" cy="570.4" rx="17.3" ry="16.6" fill="#4b4b4b" />
<path d="M253 567.2 L287 567.2 M254.5 581 L285 581 M269.3 554 L269.3 587" stroke="#8f8f8f" stroke-width="0.9" fill="none"/>
<path d="M221.7 502.8 C225.7 499.3 230.0 498.3 235.6 496.8 C241.2 495.3 248.1 494.6 255.4 493.9 C262.7 493.1 271.6 492.5 279.2 492.3 C286.8 492.1 295.4 492.3 301.0 492.9 C306.6 493.5 309.3 493.8 312.8 495.9 C316.3 498.0 319.2 501.9 321.8 505.8 C324.4 509.8 326.1 514.6 328.7 519.6 C331.3 524.6 335.1 531.2 337.6 535.5 C340.1 539.8 342.8 540.8 343.6 545.4 C344.4 550.0 343.8 556.9 342.6 563.2 C341.4 569.5 338.2 577.0 336.6 583.0 C335.0 589.0 334.7 593.6 332.7 598.9 C330.7 604.2 328.7 610.1 324.7 614.7 C320.7 619.3 314.5 623.5 308.9 626.6 C303.3 629.8 297.6 632.0 291.0 633.6 C284.4 635.2 276.2 636.7 269.3 636.5 C262.4 636.3 256.0 634.6 249.4 632.6 C242.8 630.6 234.9 627.9 229.6 624.6 C224.3 621.3 221.0 617.2 217.7 612.8 C214.4 608.4 211.8 604.3 210.0 598.0 C208.2 591.7 207.7 582.2 206.8 575.1 C206.0 568.0 204.9 561.9 204.9 555.3 C204.9 548.7 205.7 541.8 206.8 535.5 C208.0 529.2 209.3 523.1 211.8 517.6 C214.3 512.1 217.7 506.3 221.7 502.8Z" fill="url(#st2)" />
<ellipse cx="268.8" cy="555.8" rx="40.1" ry="37.2" fill="none" stroke="#c0a038" stroke-width="0.8"/>
<path d="M342.3 560.7 L348.2 560.7 L348.2 557.4 L360.1 557.4 L360.1 560.7 L368.7 560.7 L368.7 557.4 L374.6 557.4 L374.6 550.2 L391.1 550.2 L391.1 546.2 L408.2 546.2 L408.2 549.5 L411.5 549.5 L411.5 627.4 L403.6 627.4 L403.6 630.0 L397.0 630.0 L397.0 633.3 L387.8 633.3 L387.8 638.6 L358.1 638.6 L358.1 634.0 L346.9 634.0 L346.9 630.0 L340.9 630.0 L340.9 620.8 L336.3 620.8 L336.3 604.9 L340.3 604.9 L340.3 596.4 L358.1 596.4 L358.1 582.5 L342.3 582.5Z" fill="#13a81b" stroke="#22d42e" stroke-width="1.2"/>
<path d="M342.3 560.7 L348.2 560.7 L348.2 557.4 L360.1 557.4 L360.1 560.7 L368.7 560.7 L368.7 557.4 L374.6 557.4 L374.6 550.2 L391.1 550.2 L391.1 546.2 L408.2 546.2 L408.2 549.5 L411.5 549.5 L411.5 627.4 L403.6 627.4 L403.6 630.0 L397.0 630.0 L397.0 633.3 L387.8 633.3 L387.8 638.6 L358.1 638.6 L358.1 634.0 L346.9 634.0 L346.9 630.0 L340.9 630.0 L340.9 620.8 L336.3 620.8 L336.3 604.9 L340.3 604.9 L340.3 596.4 L358.1 596.4 L358.1 582.5 L342.3 582.5Z" fill="url(#vs)" />
<path d="M350.6 566.0 C350.7 565.0 350.8 563.9 351.5 563.4 C352.2 562.8 353.1 562.3 354.8 562.7 C356.4 563.2 359.0 565.4 361.4 566.0 C363.8 566.7 366.9 566.9 369.3 566.7 C371.7 566.5 374.3 565.9 375.9 564.7 C377.6 563.5 378.0 561.1 379.2 559.4 C380.4 557.8 381.7 555.9 383.2 554.8 C384.6 553.7 386.1 553.3 387.8 552.8 C389.4 552.3 391.5 552.3 393.1 551.9 C394.6 551.5 395.8 550.9 397.0 550.6 C398.2 550.3 399.2 549.8 400.3 550.2 C401.4 550.5 402.5 551.6 403.6 552.8 C404.7 554.0 406.0 555.7 406.9 557.4 C407.8 559.2 408.7 561.4 409.2 563.4 C409.6 565.4 409.8 567.4 409.6 569.3 C409.3 571.2 408.6 572.9 407.8 574.6 C407.1 576.2 405.6 578.1 404.9 579.2 C404.2 580.3 403.2 580.6 403.6 581.2 C404.0 581.8 407.0 582.0 407.3 582.8 C407.6 583.5 406.2 585.1 405.6 585.8 C405.0 586.5 403.1 586.5 403.6 587.1 C404.2 587.7 407.6 588.6 408.9 589.4 C410.2 590.1 411.1 590.8 411.3 591.7 C411.5 592.7 411.1 594.2 410.2 595.0 C409.4 595.9 407.2 596.5 406.3 597.0 C405.3 597.6 404.5 597.7 404.7 598.3 C404.9 599.0 406.9 599.9 407.6 601.0 C408.3 602.1 409.0 603.2 408.9 604.9 C408.8 606.7 408.0 609.4 406.9 611.5 C405.8 613.6 404.2 615.6 402.3 617.5 C400.4 619.3 398.1 621.2 395.7 622.8 C393.3 624.3 390.6 625.6 387.8 626.7 C384.9 627.8 381.6 628.8 378.5 629.4 C375.5 629.9 372.2 630.3 369.3 630.3 C366.5 630.2 363.8 629.7 361.4 629.0 C359.0 628.3 356.8 627.3 354.8 626.1 C352.8 624.8 350.9 623.2 349.5 621.4 C348.1 619.7 346.9 617.4 346.2 615.5 C345.6 613.6 345.3 611.9 345.6 610.2 C345.8 608.6 346.4 607.0 347.5 605.6 C348.6 604.2 350.4 602.9 352.2 602.0 C353.9 601.2 356.2 600.7 358.1 600.3 C360.0 599.9 362.3 600.2 363.4 599.7 C364.4 599.1 364.4 598.3 364.3 597.0 C364.2 595.7 363.0 593.5 363.0 591.7 C363.0 590.0 363.5 588.0 364.3 586.5 C365.1 584.9 366.5 583.6 368.0 582.5 C369.5 581.4 371.5 580.6 373.3 579.9 C375.0 579.2 376.9 578.8 378.5 578.3 C380.2 577.7 382.0 577.3 383.2 576.6 C384.4 575.8 385.6 574.5 385.8 573.9 C386.0 573.3 385.7 573.1 384.5 573.0 C383.3 572.9 380.6 573.7 378.5 573.3 C376.5 572.9 374.1 571.1 371.9 570.6 C369.7 570.1 367.3 570.0 365.4 570.4 C363.4 570.7 361.6 571.9 360.1 572.6 C358.5 573.3 357.3 574.5 356.1 574.6 C354.9 574.7 353.7 574.1 352.8 573.3 C351.9 572.4 350.9 570.8 350.6 569.6 C350.2 568.4 350.4 567.0 350.6 566.0Z" fill="#0b8a0e" stroke="#0b8a0e" stroke-width="4" stroke-linejoin="round"/>
<path d="M350.6 566.0 C350.7 565.0 350.8 563.9 351.5 563.4 C352.2 562.8 353.1 562.3 354.8 562.7 C356.4 563.2 359.0 565.4 361.4 566.0 C363.8 566.7 366.9 566.9 369.3 566.7 C371.7 566.5 374.3 565.9 375.9 564.7 C377.6 563.5 378.0 561.1 379.2 559.4 C380.4 557.8 381.7 555.9 383.2 554.8 C384.6 553.7 386.1 553.3 387.8 552.8 C389.4 552.3 391.5 552.3 393.1 551.9 C394.6 551.5 395.8 550.9 397.0 550.6 C398.2 550.3 399.2 549.8 400.3 550.2 C401.4 550.5 402.5 551.6 403.6 552.8 C404.7 554.0 406.0 555.7 406.9 557.4 C407.8 559.2 408.7 561.4 409.2 563.4 C409.6 565.4 409.8 567.4 409.6 569.3 C409.3 571.2 408.6 572.9 407.8 574.6 C407.1 576.2 405.6 578.1 404.9 579.2 C404.2 580.3 403.2 580.6 403.6 581.2 C404.0 581.8 407.0 582.0 407.3 582.8 C407.6 583.5 406.2 585.1 405.6 585.8 C405.0 586.5 403.1 586.5 403.6 587.1 C404.2 587.7 407.6 588.6 408.9 589.4 C410.2 590.1 411.1 590.8 411.3 591.7 C411.5 592.7 411.1 594.2 410.2 595.0 C409.4 595.9 407.2 596.5 406.3 597.0 C405.3 597.6 404.5 597.7 404.7 598.3 C404.9 599.0 406.9 599.9 407.6 601.0 C408.3 602.1 409.0 603.2 408.9 604.9 C408.8 606.7 408.0 609.4 406.9 611.5 C405.8 613.6 404.2 615.6 402.3 617.5 C400.4 619.3 398.1 621.2 395.7 622.8 C393.3 624.3 390.6 625.6 387.8 626.7 C384.9 627.8 381.6 628.8 378.5 629.4 C375.5 629.9 372.2 630.3 369.3 630.3 C366.5 630.2 363.8 629.7 361.4 629.0 C359.0 628.3 356.8 627.3 354.8 626.1 C352.8 624.8 350.9 623.2 349.5 621.4 C348.1 619.7 346.9 617.4 346.2 615.5 C345.6 613.6 345.3 611.9 345.6 610.2 C345.8 608.6 346.4 607.0 347.5 605.6 C348.6 604.2 350.4 602.9 352.2 602.0 C353.9 601.2 356.2 600.7 358.1 600.3 C360.0 599.9 362.3 600.2 363.4 599.7 C364.4 599.1 364.4 598.3 364.3 597.0 C364.2 595.7 363.0 593.5 363.0 591.7 C363.0 590.0 363.5 588.0 364.3 586.5 C365.1 584.9 366.5 583.6 368.0 582.5 C369.5 581.4 371.5 580.6 373.3 579.9 C375.0 579.2 376.9 578.8 378.5 578.3 C380.2 577.7 382.0 577.3 383.2 576.6 C384.4 575.8 385.6 574.5 385.8 573.9 C386.0 573.3 385.7 573.1 384.5 573.0 C383.3 572.9 380.6 573.7 378.5 573.3 C376.5 572.9 374.1 571.1 371.9 570.6 C369.7 570.1 367.3 570.0 365.4 570.4 C363.4 570.7 361.6 571.9 360.1 572.6 C358.5 573.3 357.3 574.5 356.1 574.6 C354.9 574.7 353.7 574.1 352.8 573.3 C351.9 572.4 350.9 570.8 350.6 569.6 C350.2 568.4 350.4 567.0 350.6 566.0Z" fill="#c42d31" stroke="#a85224" stroke-width="1"/>
<path d="M350.6 566.0 C350.7 565.0 350.8 563.9 351.5 563.4 C352.2 562.8 353.1 562.3 354.8 562.7 C356.4 563.2 359.0 565.4 361.4 566.0 C363.8 566.7 366.9 566.9 369.3 566.7 C371.7 566.5 374.3 565.9 375.9 564.7 C377.6 563.5 378.0 561.1 379.2 559.4 C380.4 557.8 381.7 555.9 383.2 554.8 C384.6 553.7 386.1 553.3 387.8 552.8 C389.4 552.3 391.5 552.3 393.1 551.9 C394.6 551.5 395.8 550.9 397.0 550.6 C398.2 550.3 399.2 549.8 400.3 550.2 C401.4 550.5 402.5 551.6 403.6 552.8 C404.7 554.0 406.0 555.7 406.9 557.4 C407.8 559.2 408.7 561.4 409.2 563.4 C409.6 565.4 409.8 567.4 409.6 569.3 C409.3 571.2 408.6 572.9 407.8 574.6 C407.1 576.2 405.6 578.1 404.9 579.2 C404.2 580.3 403.2 580.6 403.6 581.2 C404.0 581.8 407.0 582.0 407.3 582.8 C407.6 583.5 406.2 585.1 405.6 585.8 C405.0 586.5 403.1 586.5 403.6 587.1 C404.2 587.7 407.6 588.6 408.9 589.4 C410.2 590.1 411.1 590.8 411.3 591.7 C411.5 592.7 411.1 594.2 410.2 595.0 C409.4 595.9 407.2 596.5 406.3 597.0 C405.3 597.6 404.5 597.7 404.7 598.3 C404.9 599.0 406.9 599.9 407.6 601.0 C408.3 602.1 409.0 603.2 408.9 604.9 C408.8 606.7 408.0 609.4 406.9 611.5 C405.8 613.6 404.2 615.6 402.3 617.5 C400.4 619.3 398.1 621.2 395.7 622.8 C393.3 624.3 390.6 625.6 387.8 626.7 C384.9 627.8 381.6 628.8 378.5 629.4 C375.5 629.9 372.2 630.3 369.3 630.3 C366.5 630.2 363.8 629.7 361.4 629.0 C359.0 628.3 356.8 627.3 354.8 626.1 C352.8 624.8 350.9 623.2 349.5 621.4 C348.1 619.7 346.9 617.4 346.2 615.5 C345.6 613.6 345.3 611.9 345.6 610.2 C345.8 608.6 346.4 607.0 347.5 605.6 C348.6 604.2 350.4 602.9 352.2 602.0 C353.9 601.2 356.2 600.7 358.1 600.3 C360.0 599.9 362.3 600.2 363.4 599.7 C364.4 599.1 364.4 598.3 364.3 597.0 C364.2 595.7 363.0 593.5 363.0 591.7 C363.0 590.0 363.5 588.0 364.3 586.5 C365.1 584.9 366.5 583.6 368.0 582.5 C369.5 581.4 371.5 580.6 373.3 579.9 C375.0 579.2 376.9 578.8 378.5 578.3 C380.2 577.7 382.0 577.3 383.2 576.6 C384.4 575.8 385.6 574.5 385.8 573.9 C386.0 573.3 385.7 573.1 384.5 573.0 C383.3 572.9 380.6 573.7 378.5 573.3 C376.5 572.9 374.1 571.1 371.9 570.6 C369.7 570.1 367.3 570.0 365.4 570.4 C363.4 570.7 361.6 571.9 360.1 572.6 C358.5 573.3 357.3 574.5 356.1 574.6 C354.9 574.7 353.7 574.1 352.8 573.3 C351.9 572.4 350.9 570.8 350.6 569.6 C350.2 568.4 350.4 567.0 350.6 566.0Z" fill="url(#st2)" />
<path d="M385 574 Q372 580 366.5 587 Q365 595 371 600 Q379 606 383 612 Q383 620 372 623 Q360 624 355.5 616 Q354 607 362 605 Q371 604.5 373 611 Q372.5 616 366 615.5 Q362 613 364.5 610" stroke="#b45a20" stroke-width="1" fill="none"/>
<path d="M355 567.5 Q366 569.5 374 568.5 Q381 570 385.5 573" stroke="#b45a20" stroke-width="1" fill="none"/>
<path d="M398 551 Q405 560 404 570 Q401 578 400 582" stroke="#b45a20" stroke-width="0.9" fill="none"/>
<ellipse cx="391.5" cy="562.6" rx="2.8" ry="2.6" fill="#43598f" stroke="#a85224" stroke-width="1"/>
<path d="M188.6 649.6 L187.2 617" stroke="#10108a" stroke-width="1.4" fill="none"/><path d="M184.4 620 L187 610 L190 620Z" fill="#10108a"/>
<path d="M189.6 649 L191.4 620" stroke="#0f8a10" stroke-width="1.2" fill="none"/><path d="M189.4 622 L191.7 614 L193.6 622Z" fill="#0f8a10"/>
<path d="M188.6 649.6 L238 649.6" stroke="#a01010" stroke-width="1.6" fill="none"/><path d="M236 647 L246 649.6 L236 652.2Z" fill="#a01010"/>
</svg></div>
<div id="topbar" class="abs"></div>
<div class="abs btn" style="left:665px;width:140px;"><div class="sep" style="left:30px"></div><svg class="abs" style="left:7px;top:14px" width="21" height="8" viewBox="0 0 21 8"><path d="M1 0.9 L10.5 5.9 L20 0.9" fill="none" stroke="#fff" stroke-width="1.5" stroke-linecap="round" stroke-linejoin="round"/></svg></div>
<div class="abs btn" style="left:824px;width:260px;"><div class="sep" style="left:30px"></div><svg class="abs" style="left:7px;top:14px" width="21" height="8" viewBox="0 0 21 8"><path d="M1 0.9 L10.5 5.9 L20 0.9" fill="none" stroke="#fff" stroke-width="1.5" stroke-linecap="round" stroke-linejoin="round"/></svg></div>
<div id="panel" class="abs"></div>
<div id="phead" class="abs"></div>
<div class="abs" style="left:534px;top:692px;width:477.5px;height:2px;background:#f4f4f4"></div>
<svg class="abs" style="left:554px;top:43px" width="16" height="14" viewBox="0 0 16 14"><path d="M1.2 6.6 L8 2 L14.8 6.6 M1.2 12 L8 7.4 L14.8 12" fill="none" stroke="#fff" stroke-width="1.3" stroke-linecap="round" stroke-linejoin="round"/></svg>
<div class="abs" style="left:696px;top:41px;width:240px;height:24px;background:#2b2b2b;border:1px solid #4c4c55;border-radius:4px;box-sizing:border-box"></div>
<svg class="abs" style="left:702px;top:50px" width="13" height="7" viewBox="0 0 13 7"><path d="M1 1.7 L6.5 5.3 L12 1.7" fill="none" stroke="#eee" stroke-width="1.2" stroke-linecap="round" stroke-linejoin="round"/></svg>
<svg class="abs" style="left:615px;top:620px" width="40" height="30" viewBox="615 620 40 30"><text x="620.4" y="643.1" font-family="Liberation Sans, sans-serif" font-size="19" font-weight="bold" fill="#6e3b30" textLength="25.5" lengthAdjust="spacingAndGlyphs">01</text></svg>
<div class="hr" style="top:91px"></div>
<div class="sw" style="top:99.4px;background:#FFE64D"></div><div class="cb" style="top:95px"><svg width="18" height="18" viewBox="0 0 18 18"><path d="M3.8 9 L7.4 12.6 L14.4 5.4" fill="none" stroke="#00a08c" stroke-width="2.4"/></svg></div>
<div class="sw" style="top:124.4px;background:#FF7D38"></div><div class="cb" style="top:120px"><svg width="18" height="18" viewBox="0 0 18 18"><path d="M3.8 9 L7.4 12.6 L14.4 5.4" fill="none" stroke="#00a08c" stroke-width="2.4"/></svg></div>
<div class="sw" style="top:149.4px;background:#1F1FFF"></div><div class="cb" style="top:145px"><svg width="18" height="18" viewBox="0 0 18 18"><path d="M3.8 9 L7.4 12.6 L14.4 5.4" fill="none" stroke="#00a08c" stroke-width="2.4"/></svg></div>
<div class="sw" style="top:174.4px;background:#B03029"></div><div class="cb" style="top:170px"><svg width="18" height="18" viewBox="0 0 18 18"><path d="M3.8 9 L7.4 12.6 L14.4 5.4" fill="none" stroke="#00a08c" stroke-width="2.4"/></svg></div>
<div class="sw" style="top:199.4px;background:#9654CC"></div><div class="cb" style="top:195px"><svg width="18" height="18" viewBox="0 0 18 18"><path d="M3.8 9 L7.4 12.6 L14.4 5.4" fill="none" stroke="#00a08c" stroke-width="2.4"/></svg></div>
<div class="sw" style="top:224.4px;background:#F04040"></div><div class="cb" style="top:220px"><svg width="18" height="18" viewBox="0 0 18 18"><path d="M3.8 9 L7.4 12.6 L14.4 5.4" fill="none" stroke="#00a08c" stroke-width="2.4"/></svg></div>
<div class="sw" style="top:249.4px;background:#665CC7"></div><div class="cb" style="top:245px"><svg width="18" height="18" viewBox="0 0 18 18"><path d="M3.8 9 L7.4 12.6 L14.4 5.4" fill="none" stroke="#00a08c" stroke-width="2.4"/></svg></div>
<div class="sw" style="top:274.4px;background:#4D66A1"></div><div class="cb" style="top:270px"><svg width="18" height="18" viewBox="0 0 18 18"><path d="M3.8 9 L7.4 12.6 L14.4 5.4" fill="none" stroke="#00a08c" stroke-width="2.4"/></svg></div>
<div class="sw" style="top:299.4px;background:#4D80BA"></div><div class="cb" style="top:295px"><svg width="18" height="18" viewBox="0 0 18 18"><path d="M3.8 9 L7.4 12.6 L14.4 5.4" fill="none" stroke="#00a08c" stroke-width="2.4"/></svg></div>
<div class="sw" style="top:324.4px;background:#003B6E"></div><div class="cb" style="top:320px"><svg width="18" height="18" viewBox="0 0 18 18"><path d="M3.8 9 L7.4 12.6 L14.4 5.4" fill="none" stroke="#00a08c" stroke-width="2.4"/></svg></div>
<div class="sw" style="top:349.4px;background:#00FF00"></div><div class="cb" style="top:345px"><svg width="18" height="18" viewBox="0 0 18 18"><path d="M3.8 9 L7.4 12.6 L14.4 5.4" fill="none" stroke="#00a08c" stroke-width="2.4"/></svg></div>
<div class="sw" style="top:374.4px;background:#008000"></div><div class="cb" style="top:370px"><svg width="18" height="18" viewBox="0 0 18 18"><path d="M3.8 9 L7.4 12.6 L14.4 5.4" fill="none" stroke="#00a08c" stroke-width="2.4"/></svg></div>
<div class="sw" style="top:399.4px;background:#38489B"></div><div class="cb" style="top:395px"></div>
<div class="sw" style="top:424.4px;background:#CD22D6"></div><div class="cb" style="top:420px"></div>
<div class="sw" style="top:449.4px;background:#49ADCF"></div><div class="cb" style="top:445px"></div>
<div class="sw" style="top:474.4px;background:#FFFF00"></div><div class="cb" style="top:470px"></div>
<div class="sw" style="top:499.4px;background:#E6E6E6"></div><div class="cb" style="top:495px"><svg width="18" height="18" viewBox="0 0 18 18"><path d="M3.8 9 L7.4 12.6 L14.4 5.4" fill="none" stroke="#00a08c" stroke-width="2.4"/></svg></div>
<div class="hr" style="top:551px"></div>
<div id="gc" class="abs"></div>
<div class="abs" style="left:471px;top:777px;width:538px;height:21px;border:1px solid #c8743c;box-sizing:border-box"></div>
<div class="abs side" style="top:146px"></div>
<div class="abs side" style="top:816px;left:1022px"></div>
<span class="t b" style="left:589.4px;top:42px;letter-spacing:-0.14px;">Color scheme</span>
<span class="t" style="left:724.3px;top:45px;letter-spacing:0.40px;">Line Type</span>
<span class="t b" style="left:547.4px;top:70px;letter-spacing:0.20px;">Line Type</span>
<span class="t b" style="left:694.6px;top:70px;letter-spacing:-0.02px;">Time</span>
<span class="t b" style="left:758.7px;top:70px;letter-spacing:0.16px;">Percent</span>
<span class="t b" style="left:820.5px;top:70px;letter-spacing:0.20px;">Used filament</span>
<span class="t b" style="left:945.4px;top:70px;letter-spacing:-0.11px;">Display</span>
<span class="t" style="left:571.1px;top:96px;letter-spacing:0.34px;">Inner wall</span>
<span class="t" style="left:694.8px;top:96px;letter-spacing:0.06px;">2h49m</span>
<span class="t" style="left:758.7px;top:96px;letter-spacing:-0.55px;">29.0%</span>
<span class="t" style="left:820.5px;top:96px;letter-spacing:0.09px;">38.75 m</span>
<span class="t" style="left:884.3px;top:96px;letter-spacing:0.17px;">96.94 g</span>
<span class="t" style="left:571.1px;top:121px;letter-spacing:0.46px;">Outer wall</span>
<span class="t" style="left:694.8px;top:121px;letter-spacing:0.06px;">1h27m</span>
<span class="t" style="left:758.7px;top:121px;letter-spacing:-0.55px;">15.0%</span>
<span class="t" style="left:820.5px;top:121px;letter-spacing:0.09px;">17.14 m</span>
<span class="t" style="left:884.3px;top:121px;letter-spacing:0.17px;">42.88 g</span>
<span class="t" style="left:571.1px;top:146px;letter-spacing:0.38px;">Overhang wall</span>
<span class="t" style="left:694.8px;top:146px;letter-spacing:0.06px;">9m16s</span>
<span class="t" style="left:758.7px;top:146px;letter-spacing:-0.73px;">1.6%</span>
<span class="t" style="left:820.5px;top:146px;letter-spacing:0.09px;">0.17 m</span>
<span class="t" style="left:884.3px;top:146px;letter-spacing:0.17px;">0.42 g</span>
<span class="t" style="left:571.1px;top:171px;letter-spacing:0.22px;">Sparse infill</span>
<span class="t" style="left:694.8px;top:171px;letter-spacing:0.06px;">1h25m</span>
<span class="t" style="left:758.7px;top:171px;letter-spacing:-0.55px;">14.7%</span>
<span class="t" style="left:820.5px;top:171px;letter-spacing:0.09px;">19.77 m</span>
<span class="t" style="left:884.3px;top:171px;letter-spacing:0.17px;">49.46 g</span>
<span class="t" style="left:571.1px;top:196px;letter-spacing:0.31px;">Internal solid infill</span>
<span class="t" style="left:694.8px;top:196px;letter-spacing:0.05px;">31m21s</span>
<span class="t" style="left:758.7px;top:196px;letter-spacing:-0.73px;">5.4%</span>
<span class="t" style="left:820.5px;top:196px;letter-spacing:0.09px;">7.60 m</span>
<span class="t" style="left:884.3px;top:196px;letter-spacing:0.17px;">19.00 g</span>
<span class="t" style="left:571.1px;top:221px;letter-spacing:0.46px;">Top surface</span>
<span class="t" style="left:694.8px;top:221px;letter-spacing:0.06px;">8m51s</span>
<span class="t" style="left:758.7px;top:221px;letter-spacing:-0.73px;">1.5%</span>
<span class="t" style="left:820.5px;top:221px;letter-spacing:0.09px;">1.73 m</span>
<span class="t" style="left:884.3px;top:221px;letter-spacing:0.17px;">4.33 g</span>
<span class="t" style="left:571.1px;top:246px;letter-spacing:0.48px;">Bottom surface</span>
<span class="t" style="left:694.8px;top:246px;letter-spacing:0.05px;">10m34s</span>
<span class="t" style="left:758.7px;top:246px;letter-spacing:-0.73px;">1.8%</span>
<span class="t" style="left:820.5px;top:246px;letter-spacing:0.09px;">0.92 m</span>
<span class="t" style="left:884.3px;top:246px;letter-spacing:0.17px;">2.30 g</span>
<span class="t" style="left:571.1px;top:271px;letter-spacing:0.53px;">Bridge</span>
<span class="t" style="left:694.8px;top:271px;letter-spacing:0.05px;">21m10s</span>
<span class="t" style="left:758.7px;top:271px;letter-spacing:-0.73px;">3.6%</span>
<span class="t" style="left:820.5px;top:271px;letter-spacing:0.09px;">0.89 m</span>
<span class="t" style="left:884.3px;top:271px;letter-spacing:0.17px;">2.24 g</span>
<span class="t" style="left:571.1px;top:296px;letter-spacing:0.45px;">Internal Bridge</span>
<span class="t" style="left:694.8px;top:296px;letter-spacing:0.05px;">13m25s</span>
<span class="t" style="left:758.7px;top:296px;letter-spacing:-0.73px;">2.3%</span>
<span class="t" style="left:820.5px;top:296px;letter-spacing:0.09px;">2.44 m</span>
<span class="t" style="left:884.3px;top:296px;letter-spacing:0.17px;">6.12 g</span>
<span class="t" style="left:571.1px;top:321px;letter-spacing:0.46px;">Brim</span>
<span class="t" style="left:694.8px;top:321px;letter-spacing:0.06px;">6m36s</span>
<span class="t" style="left:758.7px;top:321px;letter-spacing:-0.73px;">1.1%</span>
<span class="t" style="left:820.5px;top:321px;letter-spacing:0.09px;">0.62 m</span>
<span class="t" style="left:884.3px;top:321px;letter-spacing:0.17px;">1.56 g</span>
<span class="t" style="left:571.1px;top:346px;letter-spacing:0.64px;">Support</span>
<span class="t" style="left:694.8px;top:346px;letter-spacing:0.06px;">1h30m</span>
<span class="t" style="left:758.7px;top:346px;letter-spacing:-0.55px;">15.5%</span>
<span class="t" style="left:820.5px;top:346px;letter-spacing:0.09px;">21.13 m</span>
<span class="t" style="left:884.3px;top:346px;letter-spacing:0.17px;">52.87 g</span>
<span class="t" style="left:571.1px;top:371px;letter-spacing:0.48px;">Support interface</span>
<span class="t" style="left:694.8px;top:371px;letter-spacing:0.05px;">15m27s</span>
<span class="t" style="left:758.7px;top:371px;letter-spacing:-0.73px;">2.7%</span>
<span class="t" style="left:820.5px;top:371px;letter-spacing:0.09px;">2.04 m</span>
<span class="t" style="left:884.3px;top:371px;letter-spacing:0.17px;">5.10 g</span>
<span class="t" style="left:571.1px;top:396px;letter-spacing:0.20px;">Travel</span>
<span class="t" style="left:694.8px;top:396px;letter-spacing:0.05px;">33m39s</span>
<span class="t" style="left:758.7px;top:396px;letter-spacing:-0.73px;">5.8%</span>
<span class="t" style="left:571.1px;top:421px;letter-spacing:0.39px;">Retract</span>
<span class="t" style="left:571.1px;top:446px;letter-spacing:0.64px;">Unretract</span>
<span class="t" style="left:571.1px;top:471px;letter-spacing:0.57px;">Wipe</span>
<span class="t" style="left:571.1px;top:496px;letter-spacing:-0.35px;">Seams</span>
<span class="t b" style="left:547.6px;top:530px;letter-spacing:0.29px;">Total estimation</span>
<span class="t" style="left:547.6px;top:556px;letter-spacing:0.37px;">Total Filament:</span>
<span class="t" style="left:694.8px;top:556px;letter-spacing:0.24px;">113.22 m</span>
<span class="t" style="left:776.0px;top:556px;letter-spacing:0.17px;">283.21 g</span>
<span class="t" style="left:547.6px;top:578px;letter-spacing:0.33px;">Model Filament:</span>
<span class="t" style="left:694.8px;top:578px;letter-spacing:0.03px;">90.04 m</span>
<span class="t" style="left:766.6px;top:578px;letter-spacing:0.17px;">225.24 g</span>
<span class="t" style="left:547.6px;top:600px;letter-spacing:-0.10px;">Cost:</span>
<span class="t" style="left:694.8px;top:600px;letter-spacing:-0.23px;">5.66</span>
<span class="t" style="left:547.6px;top:622px;letter-spacing:0.23px;">Prepare time:</span>
<span class="t" style="left:694.8px;top:622px;">1s</span>
<span class="t" style="left:547.6px;top:644px;letter-spacing:0.53px;">Model printing time:</span>
<span class="t" style="left:694.8px;top:644px;letter-spacing:0.16px;">9h42m</span>
<span class="t" style="left:547.6px;top:666px;letter-spacing:0.41px;">Total time:</span>
<span class="t" style="left:694.8px;top:666px;letter-spacing:0.16px;">9h42m</span>
<span class="t ln" style="left:476.2px;top:713px;letter-spacing:0.18px;">1481814</span>
<span class="t" style="left:545.6px;top:713px;letter-spacing:0.14px;"><span class="k">G1</span><span class="w"> X123.889 Y82.884 F30000</span></span>
<span class="t ln" style="left:476.2px;top:735px;letter-spacing:0.18px;">1481815</span>
<span class="t k" style="left:545.6px;top:735px;letter-spacing:-0.54px;">SET_VELOCITY_LIMIT</span>
<span class="t w" style="left:700.6px;top:735px;letter-spacing:-0.30px;">ACCEL=5000 ACCEL_TO_DECEL=2500 SQ...</span>
<span class="t ln" style="left:476.2px;top:757px;letter-spacing:0.18px;">1481816</span>
<span class="t" style="left:545.6px;top:757px;letter-spacing:0.03px;"><span class="k">G1</span><span class="w"> F9533.62</span></span>
<span class="t ln" style="left:476.2px;top:779px;letter-spacing:0.18px;">1481817</span>
<span class="t" style="left:545.6px;top:779px;letter-spacing:0.10px;"><span class="k">G1</span><span class="w"> X122.846 Y81.841 E.04289</span></span>
<span class="t ln" style="left:476.2px;top:801px;letter-spacing:0.18px;">1481818</span>
<span class="t" style="left:545.6px;top:801px;letter-spacing:0.20px;"><span class="k">G1</span><span class="w"> E-.22867 F2400</span></span>
<span class="t ln" style="left:476.2px;top:823px;letter-spacing:0.18px;">1481819</span>
<span class="t" style="left:545.6px;top:823px;letter-spacing:-0.59px;"><span class="c">;WIPE_START</span></span>
<span class="t ln" style="left:476.2px;top:845px;letter-spacing:0.18px;">1481820</span>
<span class="t" style="left:545.6px;top:845px;letter-spacing:0.03px;"><span class="k">G1</span><span class="w"> F9533.62</span></span>
<span class="t bt" style="left:715.6px;top:-1px;letter-spacing:-0.20px;">Slice all</span>
<span class="t bt" style="left:875.1px;top:-1px;letter-spacing:0.47px;">Export G-code file</span>
<span class="t sd" style="left:1029.3px;top:148px;">764</span>
<span class="t sd" style="left:1021.3px;top:166px;">91.4</span>
<span class="t sd" style="left:1042.6px;top:818px;">1</span>
<span class="t sd" style="left:1030.2px;top:836px;">0.2</span>
</body></html>
